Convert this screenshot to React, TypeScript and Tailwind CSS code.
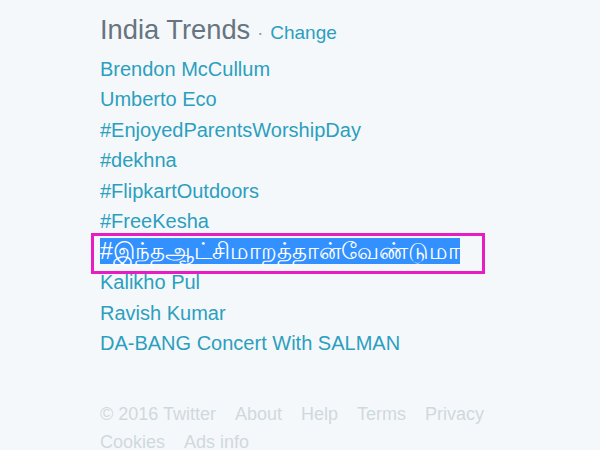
const trends = [
  "Brendon McCullum",
  "Umberto Eco",
  "#EnjoyedParentsWorshipDay",
  "#dekhna",
  "#FlipkartOutdoors",
  "#FreeKesha",
]

const moreTrends = ["Kalikho Pul", "Ravish Kumar", "DA-BANG Concert With SALMAN"]

const footer = ["© 2016 Twitter", "About", "Help", "Terms", "Privacy", "Cookies", "Ads info"]

export default function App() {
  return (
    <div
      className="w-[600px] h-[450px] overflow-hidden bg-[#f5f8fa] pl-[100px] pt-[13px]"
      style={{ fontFamily: '"Liberation Sans", Arial, "Noto Sans", sans-serif' }}
    >
      <div className="flex items-baseline">
        <h3 className="text-[27.3px] leading-[34px] text-[#66757f]">India Trends</h3>
        <span className="text-[18px] text-[#8899a6] mx-[7px]">·</span>
        <a className="text-[19px] text-[#2b9fbf]">Change</a>
      </div>

      <ul className="mt-[6px] text-[20px] leading-[30.5px] text-[#2b9fbf]">
        {trends.map((t) => (
          <li key={t}>{t}</li>
        ))}
        <li className="relative">
          <span className="bg-[#3390ff] text-white text-[23.2px] leading-[28px]">
            #இந்தஆட்சிமாறத்தான்வேண்டுமா
          </span>
          <div className="absolute left-[-9px] top-[-4px] w-[394px] h-[41px] border-[3px] border-[#e81cc4]" />
        </li>
        {moreTrends.map((t) => (
          <li key={t}>{t}</li>
        ))}
      </ul>

      <div className="mt-[41px] w-[400px] flex flex-wrap gap-x-[19px] text-[18px] leading-[28px] text-[#d0d8de]">
        {footer.map((f) => (
          <span key={f}>{f}</span>
        ))}
      </div>
    </div>
  )
}
